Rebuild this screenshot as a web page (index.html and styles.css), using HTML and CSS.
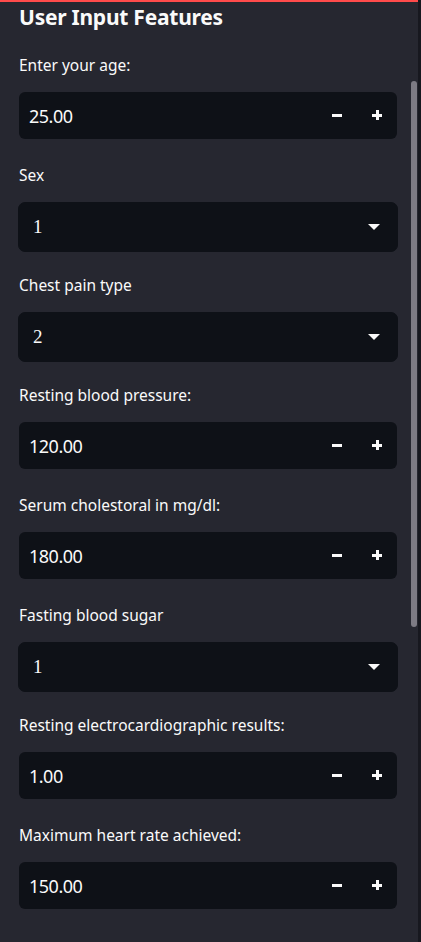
FILE: index.html
```html
<!DOCTYPE html>
<html>
<head>
<meta charset="utf-8">
<link rel="stylesheet" href="styles.css">
</head>
<body>
<div class="topbar"></div>
<div class="sidebar">
  <h2 class="title">User Input Features</h2>

  <div class="field num">
    <label class="lbl">Enter your age:</label>
    <div class="numbox"><span class="val">25.00</span><span class="btns"><span class="minus"></span><span class="plus"></span></span></div>
  </div>

  <div class="field sel">
    <label class="lbl">Sex</label>
    <div class="selbox"><span class="val">1</span><span class="caret"></span></div>
  </div>

  <div class="field sel">
    <label class="lbl">Chest pain type</label>
    <div class="selbox"><span class="val">2</span><span class="caret"></span></div>
  </div>

  <div class="field num">
    <label class="lbl">Resting blood pressure:</label>
    <div class="numbox"><span class="val">120.00</span><span class="btns"><span class="minus"></span><span class="plus"></span></span></div>
  </div>

  <div class="field num">
    <label class="lbl">Serum cholestoral in mg/dl:</label>
    <div class="numbox"><span class="val">180.00</span><span class="btns"><span class="minus"></span><span class="plus"></span></span></div>
  </div>

  <div class="field sel">
    <label class="lbl">Fasting blood sugar</label>
    <div class="selbox"><span class="val">1</span><span class="caret"></span></div>
  </div>

  <div class="field num">
    <label class="lbl">Resting electrocardiographic results:</label>
    <div class="numbox"><span class="val">1.00</span><span class="btns"><span class="minus"></span><span class="plus"></span></span></div>
  </div>

  <div class="field num">
    <label class="lbl">Maximum heart rate achieved:</label>
    <div class="numbox"><span class="val">150.00</span><span class="btns"><span class="minus"></span><span class="plus"></span></span></div>
  </div>

  <div class="field num last">
    <label class="lbl">Exercise induced angina:</label>
  </div>
</div>
<div class="scrollbar"></div>
<div class="edge"></div>
</body>
</html>
```

FILE: styles.css
```css
html, body {
  margin: 0;
  padding: 0;
  height: 942px;
  overflow: hidden;
  background: #262730;
  color: #fafafa;
  font-family: "Noto Sans", "Open Sans", sans-serif;
}
body { position: relative; }
.topbar {
  height: 2px;
  background: #ff4b4b;
}
.sidebar {
  padding: 0 24px 0 19px;
  display: flex;
  flex-direction: column;
}
.title {
  margin: 0;
  font-size: 21px;
  font-weight: 700;
  line-height: 28px;
  letter-spacing: -0.25px;
  height: 30px;
  margin-top: 1px;
  margin-bottom: 24px;
}
.field {
  display: flex;
  flex-direction: column;
}
.lbl {
  font-size: 15.5px;
  line-height: 16px;
  height: 20px;
  margin-bottom: 15px;
}
.num { margin-bottom: 28px; }
.sel { margin-bottom: 25px; }
.last { margin-top: 5px; }
.sel .selbox { margin-left: -1px; margin-right: -1px; }
.numbox {
  height: 47px;
  background: #0e1117;
  border-radius: 6px;
  display: flex;
  align-items: center;
  padding-left: 10px;
  box-sizing: border-box;
}
.selbox {
  height: 50px;
  background: #0e1117;
  border: 1px solid #0e1117;
  border-radius: 7px;
  display: flex;
  align-items: center;
  padding-left: 14px;
  box-sizing: border-box;
}
.val {
  flex: 1;
  font-family: "Liberation Serif", "DejaVu Serif", serif;
  font-size: 19px;
}
.numbox .val { font-family: "Noto Sans", sans-serif; font-size: 18px; letter-spacing: -0.5px; }
.btns {
  display: flex;
  align-items: center;
  width: 68px;
  height: 100%;
}
.minus, .plus {
  position: relative;
  height: 100%;
}
.minus::before, .plus::before, .plus::after {
  content: "";
  position: absolute;
  background: #fafafa;
}
.minus::before {
  left: 3px; top: 22px; width: 10px; height: 2.5px;
}
.plus::before {
  left: 3px; top: 22px; width: 10px; height: 2.5px;
}
.plus::after {
  left: 7px; top: 18px; width: 2.5px; height: 10px;
}
.btns .minus { width: 40px; }
.btns .plus { width: 28px; }
.caret {
  width: 0; height: 0;
  border-left: 6px solid transparent;
  border-right: 6px solid transparent;
  border-top: 6px solid #fafafa;
  margin-right: 17px;
}
.scrollbar {
  position: absolute;
  left: 411px;
  top: 81px;
  width: 6px;
  height: 546px;
  border-radius: 3px;
  background: #7d7b84;
}
.edge {
  position: absolute;
  right: 0;
  top: 0;
  width: 3px;
  height: 942px;
  background: #17181f;
}
```
